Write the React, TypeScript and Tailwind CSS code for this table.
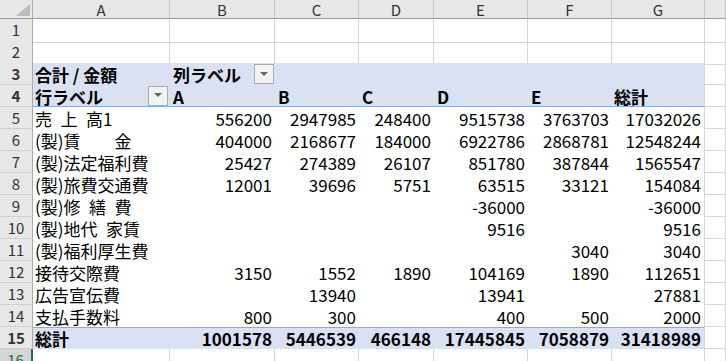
const GRID = 'grid grid-cols-[33px_137px_105px_84px_75px_94px_84px_93px_1fr]';

const letters = ['A', 'B', 'C', 'D', 'E', 'F', 'G', ''];

const body: string[][] = [
  ['売\u2002上\u2002高1', '556200', '2947985', '248400', '9515738', '3763703', '17032026'],
  ['(製)賃　　金', '404000', '2168677', '184000', '6922786', '2868781', '12548244'],
  ['(製)法定福利費', '25427', '274389', '26107', '851780', '387844', '1565547'],
  ['(製)旅費交通費', '12001', '39696', '5751', '63515', '33121', '154084'],
  ['(製)修\u2002繕\u2002費', '', '', '', '-36000', '', '-36000'],
  ['(製)地代\u2002家賃', '', '', '', '9516', '', '9516'],
  ['(製)福利厚生費', '', '', '', '', '3040', '3040'],
  ['接待交際費', '3150', '1552', '1890', '104169', '1890', '112651'],
  ['広告宣伝費', '', '13940', '', '13941', '', '27881'],
  ['支払手数料', '800', '300', '', '400', '500', '2000'],
];

const total = ['総計', '1001578', '5446539', '466148', '17445845', '7058879', '31418989'];

function RowHead({ n, active }: { n: number; active?: boolean }) {
  return (
    <div
      className={
        active
          ? 'bg-[#d6d6d6] border-r-2 border-r-[#217346] border-b border-b-[#d0d0d0] flex items-center justify-center text-[15px] text-[#217346]'
          : 'bg-[#e8e8e8] border-r border-r-[#ababab] border-b border-b-[#d0d0d0] flex items-center justify-center text-[15px] text-[#333]'
      }
    >
      {n}
    </div>
  );
}

function Plain() {
  return <div className="border-r border-b border-[#d6d6d6]" />;
}

function FilterButton() {
  return (
    <div className="w-[20px] h-[20px] shrink-0 border border-[#ababab] bg-[#f2f2f2] flex items-center justify-center">
      <svg width="8" height="5" viewBox="0 0 8 5">
        <path d="M0 0h8L4 4z" fill="#666" />
      </svg>
    </div>
  );
}

function EmptyRow({ n, active }: { n: number; active?: boolean }) {
  return (
    <div className={`${GRID} h-[22px]`}>
      <RowHead n={n} active={active} />
      {letters.map((l, i) => (
        <Plain key={i} />
      ))}
    </div>
  );
}

export default function App() {
  return (
    <div className="w-[726px] h-[361px] overflow-hidden bg-white text-black font-['Noto_Sans_CJK_JP','Noto_Sans',sans-serif]">
      {/* column letters */}
      <div className={`${GRID} h-[19px]`}>
        <div className="bg-[#e8e8e8] border-r border-r-[#ababab] border-b border-b-[#9b9b9b] flex items-end justify-end pr-[2px] pb-[2px]">
          <svg width="14" height="12" viewBox="0 0 14 12">
            <path d="M14 0V12H0z" fill="#bcbcbc" />
          </svg>
        </div>
        {letters.map((l, i) => (
          <div
            key={i}
            className="bg-[#e8e8e8] border-r border-r-[#c6c6c6] border-b border-b-[#9b9b9b] flex items-center justify-center text-[15px] leading-none text-[#333]"
          >
            {l}
          </div>
        ))}
      </div>

      <EmptyRow n={1} />
      <EmptyRow n={2} />

      {/* pivot header rows */}
      <div className={`${GRID} h-[22px] text-[17px] leading-none font-bold`}>
        <RowHead n={3} />
        <div className="bg-[#d9e1f2] flex items-end pl-[2px] pb-[2px]">合計 / 金額</div>
        <div className="bg-[#d9e1f2] flex items-center justify-between pl-[3px] pr-[1px]">
          <span className="self-end pb-[2px]">列ラベル</span>
          <FilterButton />
        </div>
        <div className="bg-[#d9e1f2]" />
        <div className="bg-[#d9e1f2]" />
        <div className="bg-[#d9e1f2]" />
        <div className="bg-[#d9e1f2]" />
        <div className="bg-[#d9e1f2] border-r border-[#d6d6d6]" />
        <Plain />
      </div>

      <div className={`${GRID} h-[22px] text-[17px] leading-none font-bold`}>
        <RowHead n={4} />
        <div className="bg-[#d9e1f2] border-b border-[#8ea9db] flex items-center justify-between pl-[2px] pr-[2px]">
          <span className="self-end pb-[1px]">行ラベル</span>
          <FilterButton />
        </div>
        {['A', 'B', 'C', 'D', 'E'].map((h) => (
          <div key={h} className="bg-[#d9e1f2] border-b border-[#8ea9db] flex items-end pl-[3px] pb-[1px]">
            {h}
          </div>
        ))}
        <div className="bg-[#d9e1f2] border-b border-b-[#8ea9db] border-r border-r-[#d6d6d6] flex items-end pl-[2px] pb-[1px]">
          総計
        </div>
        <Plain />
      </div>

      {/* body */}
      {body.map((r, ri) => (
        <div key={ri} className={`${GRID} h-[22px] text-[17px] leading-none`}>
          <RowHead n={ri + 5} />
          {r.map((v, ci) => (
            <div
              key={ci}
              className={
                ci === 0
                  ? 'flex items-end pl-[2px] pb-[2px] whitespace-pre'
                  : ci === 6
                    ? 'flex items-end justify-end pr-[3px] pb-[2px] border-r border-[#d6d6d6]'
                    : 'flex items-end justify-end pr-[3px] pb-[2px]'
              }
            >
              {v}
            </div>
          ))}
          <Plain />
        </div>
      ))}

      {/* grand total */}
      <div className={`${GRID} h-[22px] text-[17px] leading-none font-bold`}>
        <RowHead n={15} />
        {total.map((v, ci) => (
          <div
            key={ci}
            className={
              ci === 0
                ? 'bg-[#d9e1f2] border-t border-[#8ea9db] flex items-end pl-[2px] pb-[2px]'
                : ci === 6
                  ? 'bg-[#d9e1f2] border-t border-t-[#8ea9db] border-r border-r-[#d6d6d6] flex items-end justify-end pr-[3px] pb-[2px]'
                  : 'bg-[#d9e1f2] border-t border-[#8ea9db] flex items-end justify-end pr-[3px] pb-[2px]'
            }
          >
            {v}
          </div>
        ))}
        <Plain />
      </div>

      <EmptyRow n={16} active />
    </div>
  );
}
